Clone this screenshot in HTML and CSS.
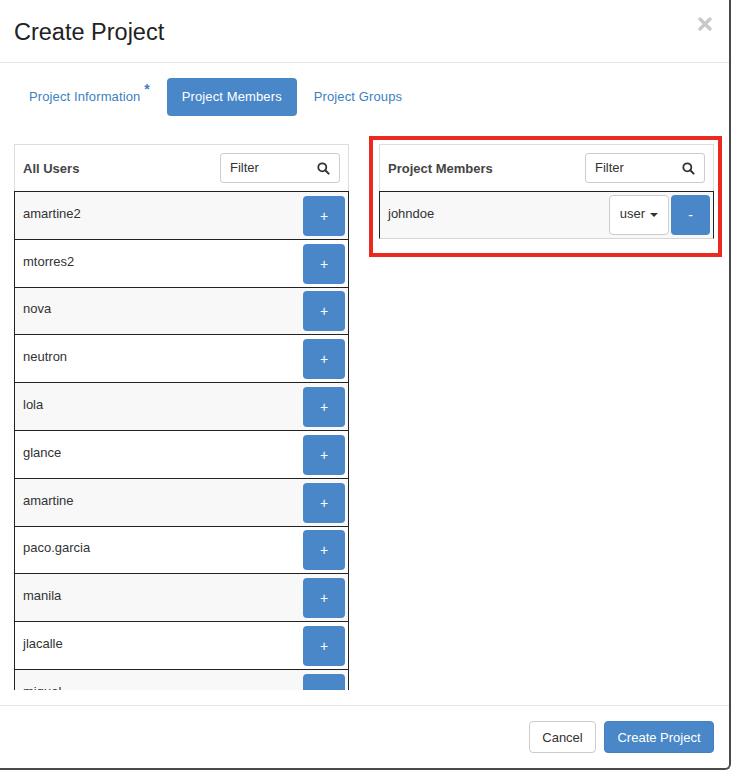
FILE: index.html
```html
<!DOCTYPE html>
<html>
<head>
<meta charset="utf-8">
<link rel="stylesheet" href="styles.css">
</head>
<body>
<div class="dialog">
  <div class="header">
    <h1 class="title">Create Project</h1>
    <svg class="close" width="14" height="14" viewBox="0 0 14 14"><path d="M2 2L12 12M12 2L2 12" stroke="#c9c9c9" stroke-width="3.4" stroke-linecap="round"/></svg>
  </div>
  <div class="body">
    <div class="tabs">
      <a class="tab">Project Information <sup>*</sup></a>
      <a class="tab active">Project Members</a>
      <a class="tab">Project Groups</a>
    </div>
    <div class="columns">
      <div class="panel">
        <div class="panel-head">
          <span class="panel-title">All Users</span>
          <div class="filter"><span>Filter</span><svg width="13" height="13" viewBox="0 0 13 13"><circle cx="5.3" cy="5.3" r="4" fill="none" stroke="#333" stroke-width="1.8"/><path d="M8.3 8.3L11.6 11.6" stroke="#333" stroke-width="2" stroke-linecap="round"/></svg></div>
        </div>
        <div class="list">
          <div class="row"><span>amartine2</span><button class="btn-add">+</button></div>
          <div class="row"><span>mtorres2</span><button class="btn-add">+</button></div>
          <div class="row"><span>nova</span><button class="btn-add">+</button></div>
          <div class="row"><span>neutron</span><button class="btn-add">+</button></div>
          <div class="row"><span>lola</span><button class="btn-add">+</button></div>
          <div class="row"><span>glance</span><button class="btn-add">+</button></div>
          <div class="row"><span>amartine</span><button class="btn-add">+</button></div>
          <div class="row"><span>paco.garcia</span><button class="btn-add">+</button></div>
          <div class="row"><span>manila</span><button class="btn-add">+</button></div>
          <div class="row"><span>jlacalle</span><button class="btn-add">+</button></div>
          <div class="row"><span>miguel</span><button class="btn-add">+</button></div>
        </div>
      </div>
      <div class="panel highlighted">
        <div class="panel-head">
          <span class="panel-title">Project Members</span>
          <div class="filter"><span>Filter</span><svg width="13" height="13" viewBox="0 0 13 13"><circle cx="5.3" cy="5.3" r="4" fill="none" stroke="#333" stroke-width="1.8"/><path d="M8.3 8.3L11.6 11.6" stroke="#333" stroke-width="2" stroke-linecap="round"/></svg></div>
        </div>
        <div class="members">
          <div class="row member"><span>johndoe</span>
            <div class="actions">
              <div class="role">user <i class="caret"></i></div>
              <button class="btn-add">-</button>
            </div>
          </div>
        </div>
      </div>
    </div>
  </div>
  <div class="footer">
    <button class="btn btn-default">Cancel</button>
    <button class="btn btn-primary">Create Project</button>
  </div>
</div>
</body>
</html>
```
FILE: styles.css
```css
*, *::before, *::after { box-sizing: border-box; }
html, body { margin: 0; padding: 0; background: #fff; }
body {
  font-family: "Liberation Sans", Arial, sans-serif;
  font-size: 13px;
  color: #333;
}
.dialog {
  width: 731px;
  height: 770px;
  background: #fff;
  border-right: 2px solid #4a4a4a;
  border-bottom: 2px solid #4a4a4a;
  border-bottom-right-radius: 6px;
  display: flex;
  flex-direction: column;
}
.header {
  height: 63px;
  border-bottom: 1px solid #e5e5e5;
  display: flex;
  align-items: flex-start;
  justify-content: space-between;
  padding: 0 17px 0 14px;
}
.title {
  margin: 18px 0 0;
  font-size: 23.5px;
  font-weight: normal;
  line-height: 28px;
  color: #222;
}
.close { margin-top: 17px; }
.body {
  flex: 1;
  padding: 15px 15px 0 14px;
  overflow: hidden;
}
.tabs {
  display: flex;
  align-items: center;
  height: 38px;
}
.tab {
  color: #3c7fc2;
  padding: 0 15px;
  height: 38px;
  line-height: 38px;
  border-radius: 4px;
  letter-spacing: 0.12px;
}
.tab sup {
  font-size: 14px;
  font-weight: bold;
  color: #3c7fc2;
  vertical-align: top;
  line-height: 0;
  position: relative;
  top: 11px;
  margin-left: 0;
}
.tab.active {
  background: #4a87c8;
  color: #fff;
  margin: 0 2px 0 2px;
}
.columns {
  margin-top: 28px;
  display: flex;
  gap: 30px;
}
.panel {
  width: 335px;
  position: relative;
}
.panel.highlighted::after {
  content: "";
  position: absolute;
  left: -10px;
  right: -8px;
  top: -8px;
  height: 121px;
  border: 4px solid #ea2a20;
  pointer-events: none;
}
.panel-head {
  height: 47px;
  border: 1px solid #dedede;
  border-bottom: none;
  display: flex;
  align-items: center;
  justify-content: space-between;
  padding: 0 8px 0 8px;
}
.panel-title {
  font-weight: bold;
  color: #444;
  margin-top: 1px;
}
.filter {
  width: 120px;
  height: 30px;
  border: 1px solid #ccc;
  border-radius: 3px;
  display: flex;
  align-items: center;
  justify-content: space-between;
  padding: 0 9px 0 9px;
  color: #333;
  margin-top: -1px;
}
.filter svg { margin-top: 2px; }
.list {
  height: 499px;
  overflow: hidden;
}
.row {
  height: 47.8px;
  border: 1px solid #222;
  border-bottom: none;
  display: flex;
  align-items: center;
  justify-content: space-between;
  padding: 0 3px 0 8px;
  background: #fff;
}
.row span { margin-top: -4px; }
.member span { margin-top: -2px; }
.row:nth-child(odd) { background: #f8f8f8; }
.btn-add {
  width: 42px;
  height: 40px;
  border: none;
  border-radius: 4px;
  background: #4a87c8;
  color: #fff;
  font-family: inherit;
  font-size: 14px;
  padding: 0;
  margin-top: 1px;
}
.member {
  border-bottom: 1px solid #d6d6d6;
  padding-right: 3px;
}
.actions { display: flex; gap: 2px; align-items: center; }
.role {
  width: 60px;
  height: 40px;
  border: 1px solid #ccc;
  border-radius: 4px;
  background: #fff;
  display: flex;
  align-items: center;
  justify-content: center;
  gap: 5px;
  margin-top: 1px;
  padding-bottom: 3px;
}
.caret {
  display: inline-block;
  width: 0;
  height: 0;
  border-left: 4px solid transparent;
  border-right: 4px solid transparent;
  border-top: 4px solid #333;
  margin-top: 3px;
}
.member .btn-add { width: 39px; }
.footer {
  height: 63px;
  border-top: 1px solid #e5e5e5;
  display: flex;
  justify-content: flex-end;
  align-items: flex-start;
  gap: 8px;
  padding: 15px 15px 0 0;
}
.btn {
  height: 32px;
  border-radius: 4px;
  font-family: inherit;
  font-size: 13px;
  padding: 0 12px;
}
.btn-default {
  background: #fff;
  border: 1px solid #ccc;
  color: #333;
  width: 67px;
}
.btn-primary {
  background: #4a87c8;
  border: 1px solid #4280c2;
  color: #fff;
  width: 110px;
}
```
